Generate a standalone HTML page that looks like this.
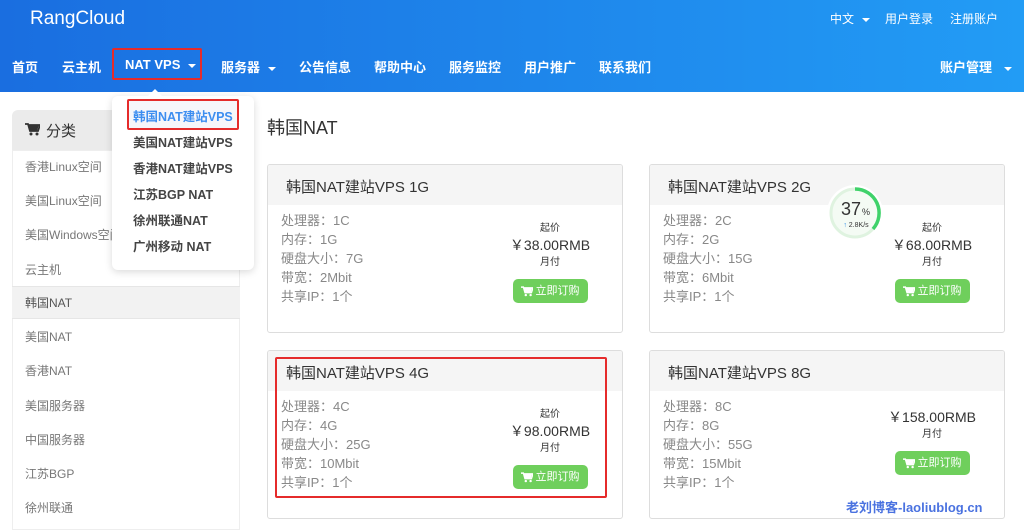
<!DOCTYPE html>
<html><head><meta charset="utf-8"><style>
*{margin:0;padding:0;box-sizing:border-box}
body{width:1024px;height:528px;overflow:hidden;background:#fff;font-family:"Liberation Sans","Noto Sans CJK SC",sans-serif;position:relative;color:#333}
.a{position:absolute;white-space:nowrap}
#hd{position:absolute;left:0;top:0;width:1024px;height:92px;background:linear-gradient(90deg,#1a6ee0,#229cf5)}
.nav{color:#fff;font-weight:bold;font-size:13px;top:57px}
.top{color:#fff;font-size:12px;top:10px}
.car{display:inline-block;width:0;height:0;border-left:4px solid transparent;border-right:4px solid transparent;border-top:4px solid #fff;vertical-align:middle;margin-left:8px}
.side{left:25px;font-size:12px;color:#777}
.dd{left:133px;font-size:12.5px;font-weight:bold;color:#444}
.card{position:absolute;width:356px;height:169px;border:1px solid #ddd;border-radius:3px;background:#fff;overflow:hidden}
.card .h{height:40px;background:#f5f5f5;font-size:15px;padding:11px 0 0 18px;color:#333}
.card .b{position:absolute;left:13px;top:46px;font-size:13px;color:#888;line-height:19px}
.card .p{position:absolute;right:22px;top:56px;width:100px;text-align:center;font-size:10px;color:#333;line-height:15px}
.card .p .v{font-size:14px;line-height:19px;margin:0}
.btn{display:inline-flex;align-items:center;gap:3px;margin-top:9px;background:#6fcf5c;color:#fff;border-radius:5px;font-size:11px;height:24px;padding:0 8px}
</style></head><body>
<div id="hd"></div>
<div class="a" style="left:30px;top:8px;font-size:19px;color:#fff">RangCloud</div>
<div class="a top" style="left:830px">中文<span class="car"></span></div>
<div class="a top" style="left:885px">用户登录</div>
<div class="a top" style="left:950px">注册账户</div>
<div class="a nav" style="left:12px">首页</div>
<div class="a nav" style="left:62px">云主机</div>
<div class="a nav" style="left:125px">NAT VPS<span class="car"></span></div>
<div class="a" style="left:112px;top:48px;width:90px;height:32px;border:2px solid #e52b2b;border-radius:2px"></div>
<div class="a nav" style="left:221px">服务器<span class="car"></span></div>
<div class="a nav" style="left:299px">公告信息</div>
<div class="a nav" style="left:374px">帮助中心</div>
<div class="a nav" style="left:449px">服务监控</div>
<div class="a nav" style="left:524px">用户推广</div>
<div class="a nav" style="left:599px">联系我们</div>
<div class="a nav" style="left:940px">账户管理<span class="car" style="margin-left:12px"></span></div>

<div class="a" style="left:12px;top:110px;width:228px;height:40px;background:#ebebeb;border-radius:6px 6px 0 0"></div>
<div class="a" style="left:12px;top:150px;width:228px;height:380px;background:#fff;border:1px solid #eee"></div>
<svg class="a" style="left:25px;top:123px" width="15" height="13" viewBox="0 0 15 13"><path d="M0 1h3l2 7h8l2-6H4" fill="none" stroke="#333" stroke-width="1.8"/><path d="M4 2h10l-2 6H5z" fill="#333"/><circle cx="6" cy="11" r="1.5" fill="#333"/><circle cx="12" cy="11" r="1.5" fill="#333"/></svg>
<div class="a" style="left:46px;top:120px;font-size:15px;color:#333">分类</div>
<div class="a" style="left:12px;top:286px;width:228px;height:33px;background:#f2f2f2;border-top:1px solid #e6e6e6;border-bottom:1px solid #e6e6e6"></div>
<div class="a side" style="top:158px">香港Linux空间</div>
<div class="a side" style="top:192px">美国Linux空间</div>
<div class="a side" style="top:226px">美国Windows空间</div>
<div class="a side" style="top:261px">云主机</div>
<div class="a side" style="top:294px;color:#555">韩国NAT</div>
<div class="a side" style="top:328px">美国NAT</div>
<div class="a side" style="top:362px">香港NAT</div>
<div class="a side" style="top:397px">美国服务器</div>
<div class="a side" style="top:431px">中国服务器</div>
<div class="a side" style="top:465px">江苏BGP</div>
<div class="a side" style="top:499px">徐州联通</div>

<div class="a" style="left:112px;top:96px;width:142px;height:174px;background:#fff;border-radius:6px;box-shadow:0 2px 8px rgba(0,0,0,.15)"></div>
<div class="a" style="left:148px;top:89px;width:0;height:0;border-left:7px solid transparent;border-right:7px solid transparent;border-bottom:7px solid #fff"></div>
<div class="a" style="left:127px;top:99px;width:112px;height:31px;border:2px solid #e52b2b;border-radius:2px;background:#f6f6fa"></div>
<div class="a dd" style="top:106px;color:#3d8ef0">韩国NAT建站VPS</div>
<div class="a dd" style="top:132px">美国NAT建站VPS</div>
<div class="a dd" style="top:158px">香港NAT建站VPS</div>
<div class="a dd" style="top:184px">江苏BGP NAT</div>
<div class="a dd" style="top:210px">徐州联通NAT</div>
<div class="a dd" style="top:236px">广州移动 NAT</div>

<div class="a" style="left:267px;top:114px;font-size:18px;color:#333">韩国NAT</div>

<svg width="0" height="0" style="position:absolute"><defs><symbol id="ct" viewBox="0 0 15 13"><path d="M0 1h3l2 7h8l2-6H4" fill="none" stroke="#fff" stroke-width="1.8"/><path d="M4 2h10l-2 6H5z" fill="#fff"/><circle cx="6" cy="11" r="1.5" fill="#fff"/><circle cx="12" cy="11" r="1.5" fill="#fff"/></symbol></defs></svg>

<div class="card" style="left:267px;top:164px"><div class="h">韩国NAT建站VPS 1G</div><div class="b">处理器：1C<br>内存：1G<br>硬盘大小：7G<br>带宽：2Mbit<br>共享IP：1个</div><div class="p">起价<div class="v">￥38.00RMB</div>月付<br><span class="btn"><svg width="12" height="11"><use href="#ct"/></svg>立即订购</span></div></div>
<div class="card" style="left:649px;top:164px"><div class="h">韩国NAT建站VPS 2G</div><div class="b">处理器：2C<br>内存：2G<br>硬盘大小：15G<br>带宽：6Mbit<br>共享IP：1个</div><div class="p">起价<div class="v">￥68.00RMB</div>月付<br><span class="btn"><svg width="12" height="11"><use href="#ct"/></svg>立即订购</span></div></div>
<div class="card" style="left:267px;top:350px"><div class="h">韩国NAT建站VPS 4G</div><div class="b">处理器：4C<br>内存：4G<br>硬盘大小：25G<br>带宽：10Mbit<br>共享IP：1个</div><div class="p">起价<div class="v">￥98.00RMB</div>月付<br><span class="btn"><svg width="12" height="11"><use href="#ct"/></svg>立即订购</span></div></div>
<div class="card" style="left:649px;top:350px"><div class="h">韩国NAT建站VPS 8G</div><div class="b">处理器：8C<br>内存：8G<br>硬盘大小：55G<br>带宽：15Mbit<br>共享IP：1个</div><div class="p" style="top:57px"><div class="v">￥158.00RMB</div>月付<br><span class="btn"><svg width="12" height="11"><use href="#ct"/></svg>立即订购</span></div></div>
<div class="a" style="left:275px;top:357px;width:332px;height:141px;border:2px solid #e52b2b;border-radius:2px"></div>

<svg class="a" style="left:826px;top:184px" width="58" height="58" viewBox="0 0 58 58">
<circle cx="29" cy="29" r="28" fill="#fff"/>
<circle cx="29" cy="29" r="24" fill="#f4fbf4" stroke="#dff3e0" stroke-width="3"/>
<path d="M29 5 A24 24 0 0 1 47 45" fill="none" stroke="#3fd26a" stroke-width="3.5"/>
<text x="25" y="31" font-size="18" text-anchor="middle" fill="#333" font-family="Liberation Sans">37</text>
<text x="36" y="31" font-size="9" fill="#333" font-family="Liberation Sans">%</text>
<text x="30" y="43" font-size="7" text-anchor="middle" fill="#333" font-family="Liberation Sans"><tspan fill="#2a8ae8">↑</tspan> 2.8K/s</text>
</svg>

<div class="a" style="left:846px;top:497px;font-size:13px;font-weight:bold;color:#4a72e0">老刘博客-laoliublog.cn</div>
</body></html>
